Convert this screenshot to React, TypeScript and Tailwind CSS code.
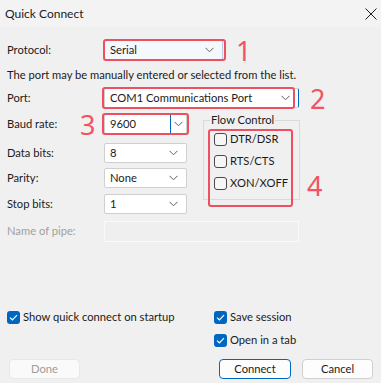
import React from 'react';

const RED = 'border-[#ef5060]';

const Chevron: React.FC = () => (
  <svg width="9" height="6" viewBox="0 0 9 6" className="shrink-0">
    <path d="M0.5 0.8 L4.5 4.8 L8.5 0.8" fill="none" stroke="#5f5f5f" strokeWidth="1" />
  </svg>
);

const Combo: React.FC<{ value: string; width: string; className?: string; children?: React.ReactNode }> = ({
  value,
  width,
  className = 'bg-white border-[#cfcfcf]',
  children,
}) => (
  <div className={`relative flex h-[20px] ${width} items-center justify-between rounded-[2px] border pl-[5px] pr-[8px] ${className}`}>
    <span className="leading-none">{value}</span>
    <Chevron />
    {children}
  </div>
);

const Box: React.FC<{ checked?: boolean }> = ({ checked }) =>
  checked ? (
    <span className="flex h-[13px] w-[13px] shrink-0 items-center justify-center rounded-[3px] bg-[#0067c0]">
      <svg width="9" height="7" viewBox="0 0 9 7">
        <path d="M1 3.6 L3.4 5.8 L8 1.2" fill="none" stroke="#fff" strokeWidth="1.2" />
      </svg>
    </span>
  ) : (
    <span className="h-[13px] w-[13px] shrink-0 rounded-[3px] border border-[#4a4a4a] bg-[#f6f6f6]" />
  );

const Num: React.FC<{ n: string; className?: string }> = ({ n, className = '' }) => (
  <span className={`text-[27px] leading-none text-[#f2535f] font-['Noto_Sans',sans-serif] ${className}`}>{n}</span>
);

export default function App() {
  return (
    <div className="h-[383px] w-[381px] overflow-hidden bg-[#f0f0f0] text-[11.2px] text-[#1b1b1b] font-['Lato',sans-serif]">
      {/* Title bar */}
      <div className="flex h-[27px] items-center justify-between bg-[#f3f3f3] pl-[5px] pr-[4px]">
        <span className="text-[12px]">Quick Connect</span>
        <svg width="12" height="12" viewBox="0 0 12 12">
          <path d="M0.5 0.5 L11.5 11.5 M11.5 0.5 L0.5 11.5" stroke="#1b1b1b" strokeWidth="1" />
        </svg>
      </div>

      <div className="px-[7px]">
        {/* Protocol */}
        <div className="mt-[13px] flex h-[20px] items-center">
          <span className="w-[97px]">Protocol:</span>
          <Combo value="Serial" width="w-[119px]" className="bg-[#f5f8fc] border-[#b9cde4]">
            <div className={`absolute -left-[2px] -top-[2px] h-[22px] w-[123px] rounded-[3px] border-2 ${RED}`} />
          </Combo>
          <Num n="1" className="ml-[13px]" />
        </div>

        <div className="mt-[7px] h-[15px] leading-[15px]">The port may be manually entered or selected from the list.</div>

        {/* Port */}
        <div className="mt-[6px] flex h-[20px] items-center">
          <span className="w-[97px]">Port:</span>
          <Combo value="COM1 Communications Port" width="w-[195px]" className="bg-white border-[#cfcfcf] border-r-[#0067c0]">
            <div className={`absolute -left-[3px] -top-[2px] h-[22px] w-[193px] rounded-[3px] border-2 ${RED}`} />
          </Combo>
          <Num n="2" className="ml-[11px]" />
        </div>

        <div className="mt-[6px] flex">
          {/* Left column */}
          <div className="w-[196px]">
            <div className="flex h-[20px] items-center">
              <span className="w-[73px]">Baud rate:</span>
              <Num n="3" className="w-[24px]" />
              <div className="relative flex h-[20px] w-[83px] items-stretch rounded-[2px] border border-[#cfcfcf] bg-white">
                <span className="flex flex-1 items-center border-r border-[#0067c0] pl-[5px]">9600</span>
                <span className="flex w-[15px] items-center justify-center">
                  <Chevron />
                </span>
                <div className={`absolute -left-[3px] -top-[2px] h-[22px] w-[87px] rounded-[3px] border-2 ${RED}`} />
              </div>
            </div>
            <div className="mt-[9px] flex h-[20px] items-center">
              <span className="w-[97px]">Data bits:</span>
              <Combo value="8" width="w-[83px]" />
            </div>
            <div className="mt-[5px] flex h-[20px] items-center">
              <span className="w-[97px]">Parity:</span>
              <Combo value="None" width="w-[83px]" />
            </div>
            <div className="mt-[6px] flex h-[20px] items-center">
              <span className="w-[97px]">Stop bits:</span>
              <Combo value="1" width="w-[83px]" />
            </div>
          </div>

          {/* Flow control */}
          <div className="flex items-start">
            <div className="relative mt-[6px] h-[80px] w-[97px] border border-[#dadada]">
              <span className="absolute -top-[9px] left-[6px] bg-[#f0f0f0] px-[1px] leading-[16px]">Flow Control</span>
              <div className="ml-[10px] mt-[12px] flex flex-col gap-[9px]">
                {['DTR/DSR', 'RTS/CTS', 'XON/XOFF'].map((l) => (
                  <div key={l} className="flex h-[13px] items-center gap-[3px]">
                    <Box />
                    <span>{l}</span>
                  </div>
                ))}
              </div>
              <div className={`absolute left-[4px] top-[8px] h-[78px] w-[85px] rounded-[3px] border-2 ${RED}`} />
            </div>
            <Num n="4" className="ml-[7px] mt-[58px]" />
          </div>
        </div>

        {/* Name of pipe */}
        <div className="mt-[7px] flex h-[21px] items-center">
          <span className="w-[97px] text-[#a0a0a0]">Name of pipe:</span>
          <div className="h-[21px] w-[195px] border border-[#fafafa] bg-[#efefef]" />
        </div>

        {/* Options */}
        <div className="mt-[69px] flex">
          <div className="flex w-[207px] items-start">
            <div className="flex h-[13px] items-center gap-[3px]">
              <Box checked />
              <span>Show quick connect on startup</span>
            </div>
          </div>
          <div className="flex flex-col gap-[10px]">
            <div className="flex h-[13px] items-center gap-[3px]">
              <Box checked />
              <span>Save session</span>
            </div>
            <div className="flex h-[13px] items-center gap-[3px]">
              <Box checked />
              <span>Open in a tab</span>
            </div>
          </div>
        </div>

        {/* Buttons */}
        <div className="mt-[12px] flex items-center pl-[2px]">
          <button className="h-[20px] w-[71px] rounded-[4px] border border-[#e8e8e8] bg-[#fafafa] text-[#9d9d9d]">Done</button>
          <button className="ml-[139px] h-[20px] w-[72px] rounded-[4px] border border-[#0067c0] bg-[#fdfdfd]">Connect</button>
          <button className="ml-[11px] h-[20px] w-[71px] rounded-[4px] border border-[#d0d0d0] bg-[#fdfdfd]">Cancel</button>
        </div>
      </div>
    </div>
  );
}
